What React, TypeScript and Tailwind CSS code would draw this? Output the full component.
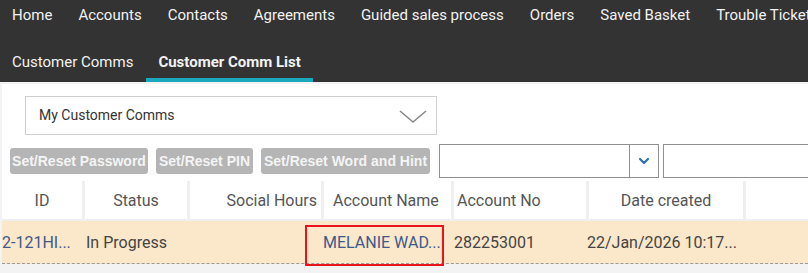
import { ChevronDown } from 'lucide-react'

const NAV = ['Home', 'Accounts', 'Contacts', 'Agreements', 'Guided sales process', 'Orders', 'Saved Basket', 'Trouble Tickets']

const COLS: { label: string; w: string; align: string }[] = [
  { label: 'ID', w: 'w-[80px]', align: 'justify-center' },
  { label: 'Status', w: 'w-[102px]', align: 'justify-center' },
  { label: 'Social Hours', w: 'w-[131px]', align: 'justify-end pr-[4px]' },
  { label: 'Account Name', w: 'w-[127px]', align: 'justify-start pl-[9px]' },
  { label: 'Account No', w: 'w-[132px]', align: 'justify-start pl-[3px]' },
  { label: 'Date created', w: 'w-[154px]', align: 'justify-center' },
  { label: '', w: 'flex-1', align: '' },
]

export default function App() {
  return (
    <div className="h-[273px] w-[808px] overflow-hidden bg-[#f3f3f3] font-['Roboto',sans-serif]">
      {/* top nav */}
      <div className="bg-[#333333]">
        <div className="flex h-[31px] items-center gap-[26px] whitespace-nowrap pl-[12px] text-[15px] text-[#f2f2f2]">
          {NAV.map((n) => (
            <span key={n}>{n}</span>
          ))}
        </div>
        <div className="flex h-[51px] items-end pl-[12px] text-[15px] text-[#f2f2f2]">
          <span className="pb-[9px]">Customer Comms</span>
          <span className="ml-[13px] border-b-[4px] border-[#1ba7bc] px-[12px] pb-[5px] font-bold">
            Customer Comm List
          </span>
        </div>
      </div>

      {/* body */}
      <div className="ml-[2px] mt-[2px] bg-white">
        <div className="px-[23px] pt-[12px]">
          <div className="flex h-[39px] w-[412px] items-center justify-between border border-[#cfcfcf] pl-[13px] pr-[8px] text-[14px] text-[#333]">
            <span>My Customer Comms</span>
            <svg width="30" height="16" viewBox="0 0 30 16" fill="none" stroke="#8a8a8a" strokeWidth="1.6">
              <path d="M2 3 L15 14 L28 3" />
            </svg>
          </div>
        </div>

        <div className="mt-[9px] flex items-start pl-[8px]">
          <div className="flex gap-[8px] pt-[4px] font-['Liberation_Sans',Arial,sans-serif] text-[14px] font-bold text-[#f4f4f4]">
            <span className="flex h-[26px] w-[138px] items-center justify-center rounded-[3px] bg-[#b5b5b5]">Set/Reset Password</span>
            <span className="flex h-[26px] w-[97px] items-center justify-center rounded-[3px] bg-[#b5b5b5]">Set/Reset PIN</span>
            <span className="flex h-[26px] w-[169px] items-center justify-center rounded-[3px] bg-[#b5b5b5]">Set/Reset Word and Hint</span>
          </div>
          <div className="ml-[9px] flex h-[34px] w-[220px] border border-[#8f8f8f]">
            <div className="flex-1" />
            <div className="flex w-[29px] items-center justify-center border-l border-[#8f8f8f]">
              <ChevronDown size={16} strokeWidth={3.2} className="text-[#2c6db5]" />
            </div>
          </div>
          <div className="ml-[4px] h-[34px] flex-1 border border-r-0 border-[#8f8f8f]" />
        </div>

        {/* table */}
        <div className="mt-[3px] flex h-[40px] gap-[3px] bg-[#efefef] pb-[2px] text-[16px] text-[#555]">
          {COLS.map((c, i) => (
            <div key={i} className={`flex items-center bg-white pt-[2px] ${c.w} ${c.align}`}>
              {c.label}
            </div>
          ))}
        </div>
        <div className="relative flex h-[43px] items-center border-b border-dashed border-[#9a9a9a] bg-[#fbe7c9] pt-[2px] text-[16px] text-[#444]">
          <span className="w-[84px] text-[#3d5a8a]">2-121HI...</span>
          <span className="w-[237px]">In Progress</span>
          <span className="w-[131px] text-[#3d5a8a]">MELANIE WAD...</span>
          <span className="w-[132px]">282253001</span>
          <span className="pl-[1px]">22/Jan/2026 10:17...</span>
          <div className="absolute left-[303px] top-[4px] h-[41px] w-[139px] border-2 border-[#e8141c]" />
        </div>
      </div>
    </div>
  )
}
